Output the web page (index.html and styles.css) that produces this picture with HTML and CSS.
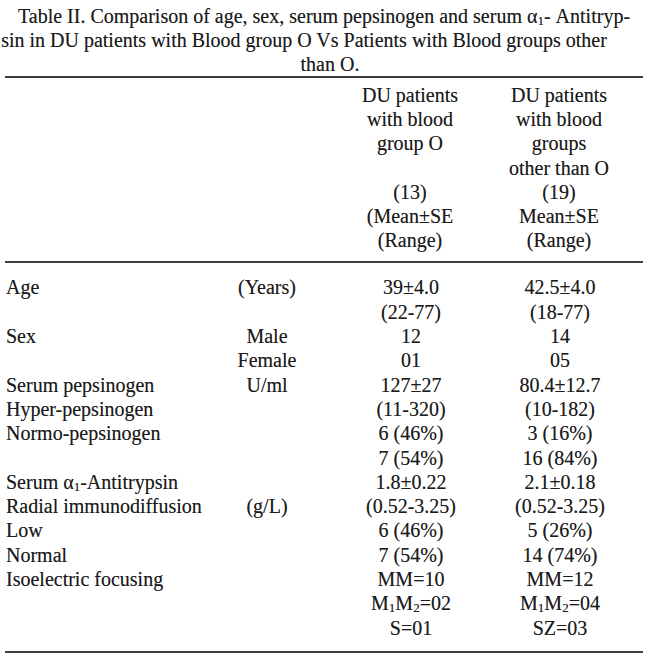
FILE: index.html
```html
<!DOCTYPE html>
<html lang="en">
<head>
<meta charset="utf-8">
<title>Table II</title>
<link rel="stylesheet" href="styles.css">
</head>
<body>
<div class="page">
  <div class="caption">
    <span class="cap-line">Table II. Comparison of age, sex, serum pepsinogen and serum &alpha;<span class="sub">1</span>- Antitryp-</span>
    <span class="cap-line cap-line-2">sin in DU patients with Blood group O Vs Patients with Blood groups other</span>
    <span class="cap-line cap-line-3">than O.</span>
  </div>
  <div class="rule"></div>
  <div class="head grid">
    <div></div>
    <div></div>
    <div class="num">DU patients<br>with blood<br>group O<br>&nbsp;<br>(13)<br>(Mean&plusmn;SE<br>(Range)</div>
    <div class="num">DU patients<br>with blood<br>groups<br>other than O<br>(19)<br>Mean&plusmn;SE<br>(Range)</div>
  </div>
  <div class="rule"></div>
  <div class="body grid">
    <div>Age</div><div class="unit">(Years)</div><div class="num">39&plusmn;4.0</div><div class="num">42.5&plusmn;4.0</div>
    <div></div><div></div><div class="num">(22-77)</div><div class="num">(18-77)</div>
    <div>Sex</div><div class="unit">Male</div><div class="num">12</div><div class="num">14</div>
    <div></div><div class="unit">Female</div><div class="num">01</div><div class="num">05</div>
    <div>Serum pepsinogen</div><div class="unit">U/ml</div><div class="num">127&plusmn;27</div><div class="num">80.4&plusmn;12.7</div>
    <div>Hyper-pepsinogen</div><div></div><div class="num">(11-320)</div><div class="num">(10-182)</div>
    <div>Normo-pepsinogen</div><div></div><div class="num">6 (46%)</div><div class="num">3 (16%)</div>
    <div></div><div></div><div class="num">7 (54%)</div><div class="num">16 (84%)</div>
    <div>Serum &alpha;<span class="sub">1</span>-Antitrypsin</div><div></div><div class="num">1.8&plusmn;0.22</div><div class="num">2.1&plusmn;0.18</div>
    <div>Radial immunodiffusion</div><div class="unit">(g/L)</div><div class="num">(0.52-3.25)</div><div class="num">(0.52-3.25)</div>
    <div>Low</div><div></div><div class="num">6 (46%)</div><div class="num">5 (26%)</div>
    <div>Normal</div><div></div><div class="num">7 (54%)</div><div class="num">14 (74%)</div>
    <div>Isoelectric focusing</div><div></div><div class="num">MM=10</div><div class="num">MM=12</div>
    <div></div><div></div><div class="num">M<span class="sub">1</span>M<span class="sub">2</span>=02</div><div class="num">M<span class="sub">1</span>M<span class="sub">2</span>=04</div>
    <div></div><div></div><div class="num">S=01</div><div class="num">SZ=03</div>
  </div>
  <div class="rule"></div>
</div>
</body>
</html>
```
FILE: styles.css
```css
html, body {
  margin: 0;
  padding: 0;
  background: #ffffff;
}
body {
  font-family: "Liberation Serif", "Times New Roman", serif;
  font-size: 20px;
  color: #1c1c1c;
  text-shadow: 0 0 0.6px rgba(0, 0, 0, 0.45);
}
.page {
  width: 638px;
  padding: 4px 7px 0 5px;
}
.caption {
  display: flex;
  flex-direction: column;
  align-items: center;
  line-height: 24px;
  white-space: nowrap;
}
.cap-line-2 {
  padding-right: 40px;
}
.cap-line-3 {
  padding-left: 12px;
}
.sub {
  font-size: 13px;
  line-height: 1;
  vertical-align: -2px;
}
.rule {
  height: 2px;
  background: #3e3e3e;
}
.grid {
  display: grid;
  grid-template-columns: 195px 132px 156px 142px;
  white-space: nowrap;
}
.head {
  line-height: 24.2px;
  margin: 5px 0 9px 0;
}
.body {
  line-height: 24.3px;
  margin: 12px 0 11px 0;
  padding-left: 1px;
}
.unit, .num {
  text-align: center;
}
```
